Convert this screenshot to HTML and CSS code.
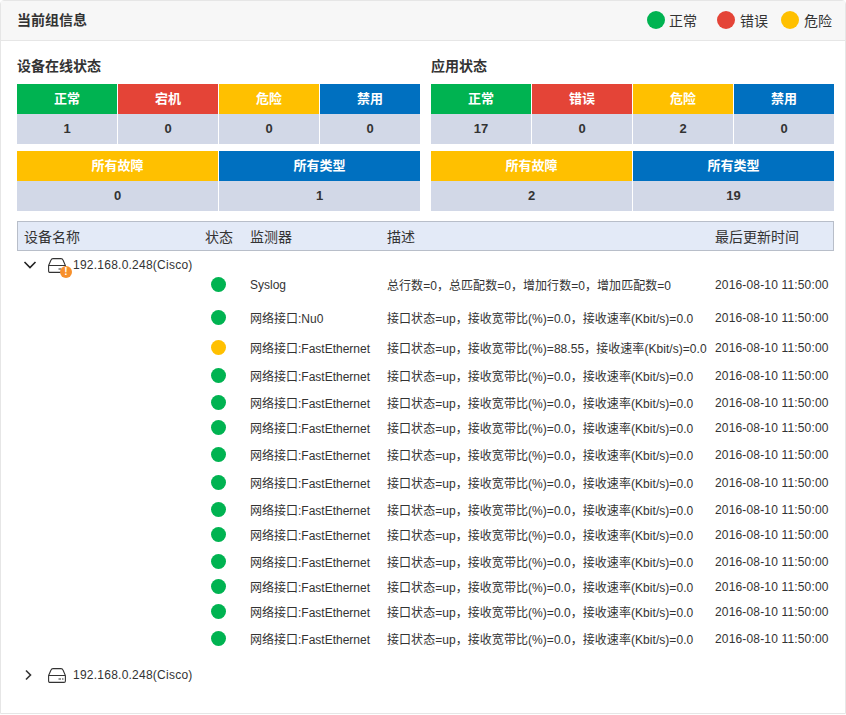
FILE: index.html
```html
<!DOCTYPE html>
<html lang="zh-CN">
<head>
    <meta charset="UTF-8">
    <meta name="viewport" content="width=device-width, initial-scale=1.0">
    <title>当前组信息</title>
    <link rel="stylesheet" href="styles.css">
</head>
<body>
    <div class="panel">
        <div class="panel-head">
            <h1 class="panel-title">当前组信息</h1>
            <div class="legend">
                <span class="legend-item"><i class="dot big green"></i>正常</span>
                <span class="legend-item wide"><i class="dot big red"></i>错误</span>
                <span class="legend-item last"><i class="dot big yellow"></i>危险</span>
            </div>
        </div>

        <div class="panel-body">
            <div class="summary">
                <section class="stat-group">
                    <h2 class="stat-title">设备在线状态</h2>
                    <div class="stat-grid four">
                        <div class="stat-cap bg-green">正常</div>
                        <div class="stat-cap bg-red">宕机</div>
                        <div class="stat-cap bg-yellow">危险</div>
                        <div class="stat-cap bg-blue">禁用</div>
                        <div class="stat-num">1</div>
                        <div class="stat-num">0</div>
                        <div class="stat-num">0</div>
                        <div class="stat-num">0</div>
                    </div>
                    <div class="stat-grid two">
                        <div class="stat-cap bg-yellow">所有故障</div>
                        <div class="stat-cap bg-blue">所有类型</div>
                        <div class="stat-num">0</div>
                        <div class="stat-num">1</div>
                    </div>
                </section>
                <section class="stat-group">
                    <h2 class="stat-title">应用状态</h2>
                    <div class="stat-grid four">
                        <div class="stat-cap bg-green">正常</div>
                        <div class="stat-cap bg-red">错误</div>
                        <div class="stat-cap bg-yellow">危险</div>
                        <div class="stat-cap bg-blue">禁用</div>
                        <div class="stat-num">17</div>
                        <div class="stat-num">0</div>
                        <div class="stat-num">2</div>
                        <div class="stat-num">0</div>
                    </div>
                    <div class="stat-grid two">
                        <div class="stat-cap bg-yellow">所有故障</div>
                        <div class="stat-cap bg-blue">所有类型</div>
                        <div class="stat-num">2</div>
                        <div class="stat-num">19</div>
                    </div>
                </section>
            </div>

            <div class="table-head">
                <span>设备名称</span>
                <span>状态</span>
                <span>监测器</span>
                <span>描述</span>
                <span>最后更新时间</span>
            </div>

            <div class="device">
                <svg class="arrow" width="14" height="14" viewBox="0 0 14 14"><path d="M1.500 4 7 9.500 12.500 4" fill="none" stroke="#222" stroke-width="1.600"/></svg>
                <span class="disk">
                    <svg width="18" height="15" viewBox="0 0 18 15"><path d="M.6 7.500 3 2Q3.500 .6 5 .6H13Q14.500 .6 15 2L17.400 7.500V13Q17.400 14.400 16 14.400H2Q.6 14.400 .6 13ZM.6 7.500H17.400" fill="none" stroke="#333" stroke-width="1.100"/><path d="M10.500 11H13M14 11H15.500" stroke="#333"/></svg>
                    <i class="alert">!</i>
                </span>
                <span class="addr">192.168.0.248(Cisco)</span>
            </div>

            <div class="monitors">
                <div class="row"><i class="dot green"></i><span>Syslog</span><span class="desc">总行数=0，总匹配数=0，增加行数=0，增加匹配数=0</span><span class="time">2016-08-10 11:50:00</span></div>
                <div class="row"><i class="dot green"></i><span>网络接口:Nu0</span><span class="desc">接口状态=up，接收宽带比(%)=0.0，接收速率(Kbit/s)=0.0</span><span class="time">2016-08-10 11:50:00</span></div>
                <div class="row"><i class="dot yellow"></i><span>网络接口:FastEthernet</span><span class="desc">接口状态=up，接收宽带比(%)=88.55，接收速率(Kbit/s)=0.0</span><span class="time">2016-08-10 11:50:00</span></div>
                <div class="row"><i class="dot green"></i><span>网络接口:FastEthernet</span><span class="desc">接口状态=up，接收宽带比(%)=0.0，接收速率(Kbit/s)=0.0</span><span class="time">2016-08-10 11:50:00</span></div>
                <div class="row"><i class="dot green"></i><span>网络接口:FastEthernet</span><span class="desc">接口状态=up，接收宽带比(%)=0.0，接收速率(Kbit/s)=0.0</span><span class="time">2016-08-10 11:50:00</span></div>
                <div class="row"><i class="dot green"></i><span>网络接口:FastEthernet</span><span class="desc">接口状态=up，接收宽带比(%)=0.0，接收速率(Kbit/s)=0.0</span><span class="time">2016-08-10 11:50:00</span></div>
                <div class="row"><i class="dot green"></i><span>网络接口:FastEthernet</span><span class="desc">接口状态=up，接收宽带比(%)=0.0，接收速率(Kbit/s)=0.0</span><span class="time">2016-08-10 11:50:00</span></div>
                <div class="row"><i class="dot green"></i><span>网络接口:FastEthernet</span><span class="desc">接口状态=up，接收宽带比(%)=0.0，接收速率(Kbit/s)=0.0</span><span class="time">2016-08-10 11:50:00</span></div>
                <div class="row"><i class="dot green"></i><span>网络接口:FastEthernet</span><span class="desc">接口状态=up，接收宽带比(%)=0.0，接收速率(Kbit/s)=0.0</span><span class="time">2016-08-10 11:50:00</span></div>
                <div class="row"><i class="dot green"></i><span>网络接口:FastEthernet</span><span class="desc">接口状态=up，接收宽带比(%)=0.0，接收速率(Kbit/s)=0.0</span><span class="time">2016-08-10 11:50:00</span></div>
                <div class="row"><i class="dot green"></i><span>网络接口:FastEthernet</span><span class="desc">接口状态=up，接收宽带比(%)=0.0，接收速率(Kbit/s)=0.0</span><span class="time">2016-08-10 11:50:00</span></div>
                <div class="row"><i class="dot green"></i><span>网络接口:FastEthernet</span><span class="desc">接口状态=up，接收宽带比(%)=0.0，接收速率(Kbit/s)=0.0</span><span class="time">2016-08-10 11:50:00</span></div>
                <div class="row"><i class="dot green"></i><span>网络接口:FastEthernet</span><span class="desc">接口状态=up，接收宽带比(%)=0.0，接收速率(Kbit/s)=0.0</span><span class="time">2016-08-10 11:50:00</span></div>
                <div class="row"><i class="dot green"></i><span>网络接口:FastEthernet</span><span class="desc">接口状态=up，接收宽带比(%)=0.0，接收速率(Kbit/s)=0.0</span><span class="time">2016-08-10 11:50:00</span></div>
            </div>

            <div class="device closed">
                <svg class="arrow" width="14" height="14" viewBox="0 0 14 14"><path d="M2 2.500 6.500 7 2 11.500" fill="none" stroke="#333" stroke-width="1.600"/></svg>
                <span class="disk">
                    <svg width="18" height="15" viewBox="0 0 18 15"><path d="M.6 7.500 3 2Q3.500 .6 5 .6H13Q14.500 .6 15 2L17.400 7.500V13Q17.400 14.400 16 14.400H2Q.6 14.400 .6 13ZM.6 7.500H17.400" fill="none" stroke="#333" stroke-width="1.100"/><path d="M10.500 11H13M14 11H15.500" stroke="#333"/></svg>
                </span>
                <span class="addr">192.168.0.248(Cisco)</span>
            </div>
        </div>
    </div>
</body>
</html>
```
FILE: styles.css
```css
* {
    box-sizing: border-box;
}
body {
    margin: 0;
    background-color: #fff;
    color: #333;
    font-family: "Liberation Sans", "Noto Sans CJK SC", sans-serif;
    font-size: 12px;
}
.panel {
    width: 846px;
    height: 714px;
    border: 1px solid #e6e6e6;
    border-radius: 4px 4px 0 0;
}
.panel-head {
    display: flex;
    justify-content: space-between;
    align-items: center;
    height: 40px;
    padding: 0 13px 1px 16px;
    background-color: #f7f7f7;
    border-bottom: 1px solid #e6e6e6;
}
.panel-title {
    margin: 0 0 2px;
    font-size: 14px;
    font-weight: bold;
}
.legend {
    display: flex;
    font-size: 14px;
}
.legend-item {
    display: flex;
    align-items: center;
    gap: 4px;
}
.legend-item.wide {
    gap: 5px;
    margin: 0 13px 0 20px;
}
.legend-item.last {
    gap: 5px;
}
.dot {
    display: block;
    width: 15px;
    height: 15px;
    border-radius: 50%;
}
.dot.big {
    width: 18px;
    height: 18px;
}
.green { background-color: #00b351; }
.red { background-color: #e44437; }
.yellow { background-color: #ffc000; }

.panel-body {
    padding: 0 11px 0 16px;
}
.summary {
    display: flex;
    gap: 11px;
}
.stat-group {
    width: 403px;
}
.stat-title {
    margin: 0;
    height: 43px;
    line-height: 51px;
    font-size: 14px;
    font-weight: bold;
}
.stat-grid {
    display: grid;
    column-gap: 1px;
    margin-bottom: 7px;
}
.stat-grid.four {
    grid-template-columns: repeat(4, 100px);
}
.stat-grid.two {
    grid-template-columns: 201px 201px;
}
.stat-cap,
.stat-num {
    height: 30px;
    line-height: 30px;
    text-align: center;
    font-size: 13px;
    font-weight: bold;
}
.stat-cap {
    color: #fff;
}
.stat-num {
    background-color: #d2d8e7;
}
.bg-green { background-color: #00b351; }
.bg-red { background-color: #e44437; }
.bg-yellow { background-color: #ffc000; }
.bg-blue { background-color: #0070c0; }

.table-head {
    display: grid;
    grid-template-columns: 181px 45px 137px 328px 1fr;
    align-items: center;
    height: 30px;
    margin-top: 3px;
    padding-left: 6px;
    background-color: #e3eaf7;
    border: 1px solid #b8bec9;
    font-size: 14px;
}
.device {
    display: flex;
    align-items: center;
    height: 18px;
    margin-top: 5px;
    padding-left: 6px;
}
.arrow {
    margin-right: 11px;
}
.disk {
    position: relative;
    display: flex;
    margin-right: 7px;
}
.addr {
    letter-spacing: 0.24px;
}
.alert {
    position: absolute;
    left: 12px;
    top: 8px;
    width: 12px;
    height: 12px;
    border-radius: 50%;
    background-color: #f7902c;
    color: #fff;
    font-size: 10px;
    font-style: normal;
    font-weight: bold;
    line-height: 12px;
    text-align: center;
}
/* row tracks follow the uneven spacing of the list */
.monitors {
    display: grid;
    grid-template-rows: 33px 30px 28px 27px 25px 27px 28px 27px 25px 27px 25px 25px 27px 16px;
    margin-top: 2px;
}
.row {
    display: grid;
    grid-template-columns: 233px 137px 328px 1fr;
    align-items: center;
    height: 16px;
    white-space: nowrap;
}
.row .dot {
    justify-self: end;
    margin-right: 24px;
}
.desc {
    letter-spacing: 0.05px;
}
.time {
    letter-spacing: 0.16px;
}
.device.closed {
    margin-top: 20px;
}
.device.closed .arrow {
    margin-left: 1px;
    margin-right: 10px;
}
```
